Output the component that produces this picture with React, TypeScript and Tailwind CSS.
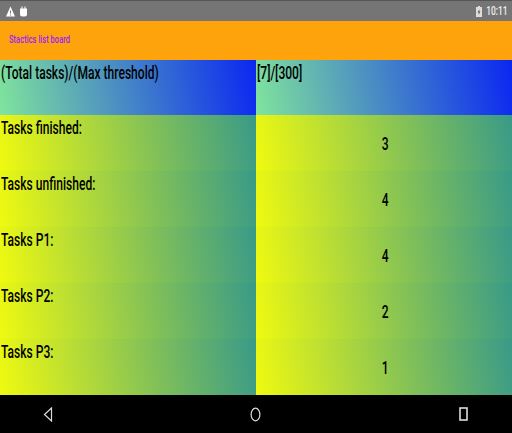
const rows = [
  { label: 'Tasks finished:', value: '3' },
  { label: 'Tasks unfinished:', value: '4' },
  { label: 'Tasks P1:', value: '4' },
  { label: 'Tasks P2:', value: '2' },
  { label: 'Tasks P3:', value: '1' },
];

const App = () => {
  return (
    <div className="flex h-[433px] w-[512px] flex-col overflow-hidden bg-black font-['Roboto',sans-serif]">
      {/* status bar */}
      <div className="flex h-[21px] items-center justify-between border-t border-[#555] bg-[#757575] pl-[6px] pr-[5px]">
        <div className="flex items-center gap-[5px]">
          <svg width="9" height="11" viewBox="0 0 9 10">
            <path d="M4.5 0 L9 10 H0 Z M4 4 V7 H5 V4 Z M4 8 V9 H5 V8 Z" fill="#fff" fillRule="evenodd" />
          </svg>
          <svg width="7" height="11" viewBox="0 0 7 10">
            <path d="M1.5 0 H2.5 V2 H4.5 V0 H5.5 V2 H7 V7.5 Q7 10 4.5 10 H2.5 Q0 10 0 7.5 V2 H1.5 Z" fill="#fff" />
          </svg>
        </div>
        <div className="flex items-center">
          <svg width="6" height="11" viewBox="0 0 6 11">
            <path d="M2 0 H4 V1 H6 V11 H0 V1 H2 Z" fill="#ddd" />
            <path d="M3.4 3 L1.6 6.5 H2.8 L2.6 9 L4.4 5.5 H3.2 Z" fill="#555" />
          </svg>
          <span className="ml-[-5px] origin-right scale-x-[0.7] whitespace-nowrap text-[12px] font-medium leading-none text-[#eee]">10:11</span>
        </div>
      </div>

      {/* title bar */}
      <div className="flex h-[39px] items-center bg-[#ffa30d] pl-[9px]">
        <span className="origin-left scale-x-[0.69] whitespace-nowrap text-[11px] font-medium text-[#9a1ff5]">Stactics list board</span>
      </div>

      {/* header row */}
      <div className="grid h-[55px] grid-cols-2">
        <div className="bg-[linear-gradient(80deg,#80e49c,#0a27f2)] pl-px pt-px">
          <p className="origin-left scale-x-[0.67] whitespace-nowrap text-[18px] font-medium leading-[24px] text-black">(Total tasks)/(Max threshold)</p>
        </div>
        <div className="bg-[linear-gradient(80deg,#80e49c,#0a27f2)] pl-px pt-px">
          <p className="origin-left scale-x-[0.67] whitespace-nowrap text-[18px] font-medium leading-[24px] text-black">[7]/[300]</p>
        </div>
      </div>

      {/* stat rows */}
      {rows.map((row) => (
        <div key={row.label} className="grid h-[56px] grid-cols-2">
          <div className="bg-[linear-gradient(80deg,#f0fa10,#389a88)] pl-px pt-px">
            <p className="origin-left scale-x-[0.67] whitespace-nowrap text-[18px] font-medium leading-[24px] text-black">{row.label}</p>
          </div>
          <div className="flex items-center justify-center bg-[linear-gradient(80deg,#f0fa10,#389a88)] pl-[2px] pt-[2px]">
            <p className="scale-x-[0.67] text-[18px] font-medium leading-[24px] text-black">{row.value}</p>
          </div>
        </div>
      ))}

      {/* nav bar */}
      <div className="flex h-[38px] items-center bg-black">
        <div className="grid w-full grid-cols-3 items-center justify-items-center">
          <svg width="10" height="15" viewBox="0 0 10 15" className="ml-[-74px]">
            <path d="M8.5 1 L1.5 7.5 L8.5 14 Z" fill="none" stroke="#ddd" strokeWidth="1.2" />
          </svg>
          <svg width="11" height="15" viewBox="0 0 11 15">
            <ellipse cx="5.5" cy="7.5" rx="4.4" ry="6.3" fill="none" stroke="#ddd" strokeWidth="1.2" />
          </svg>
          <svg width="9" height="14" viewBox="0 0 9 14" className="mr-[-74px]">
            <rect x="1" y="1" width="7" height="12" fill="none" stroke="#ddd" strokeWidth="1.6" />
          </svg>
        </div>
      </div>
    </div>
  );
};

export default App;
